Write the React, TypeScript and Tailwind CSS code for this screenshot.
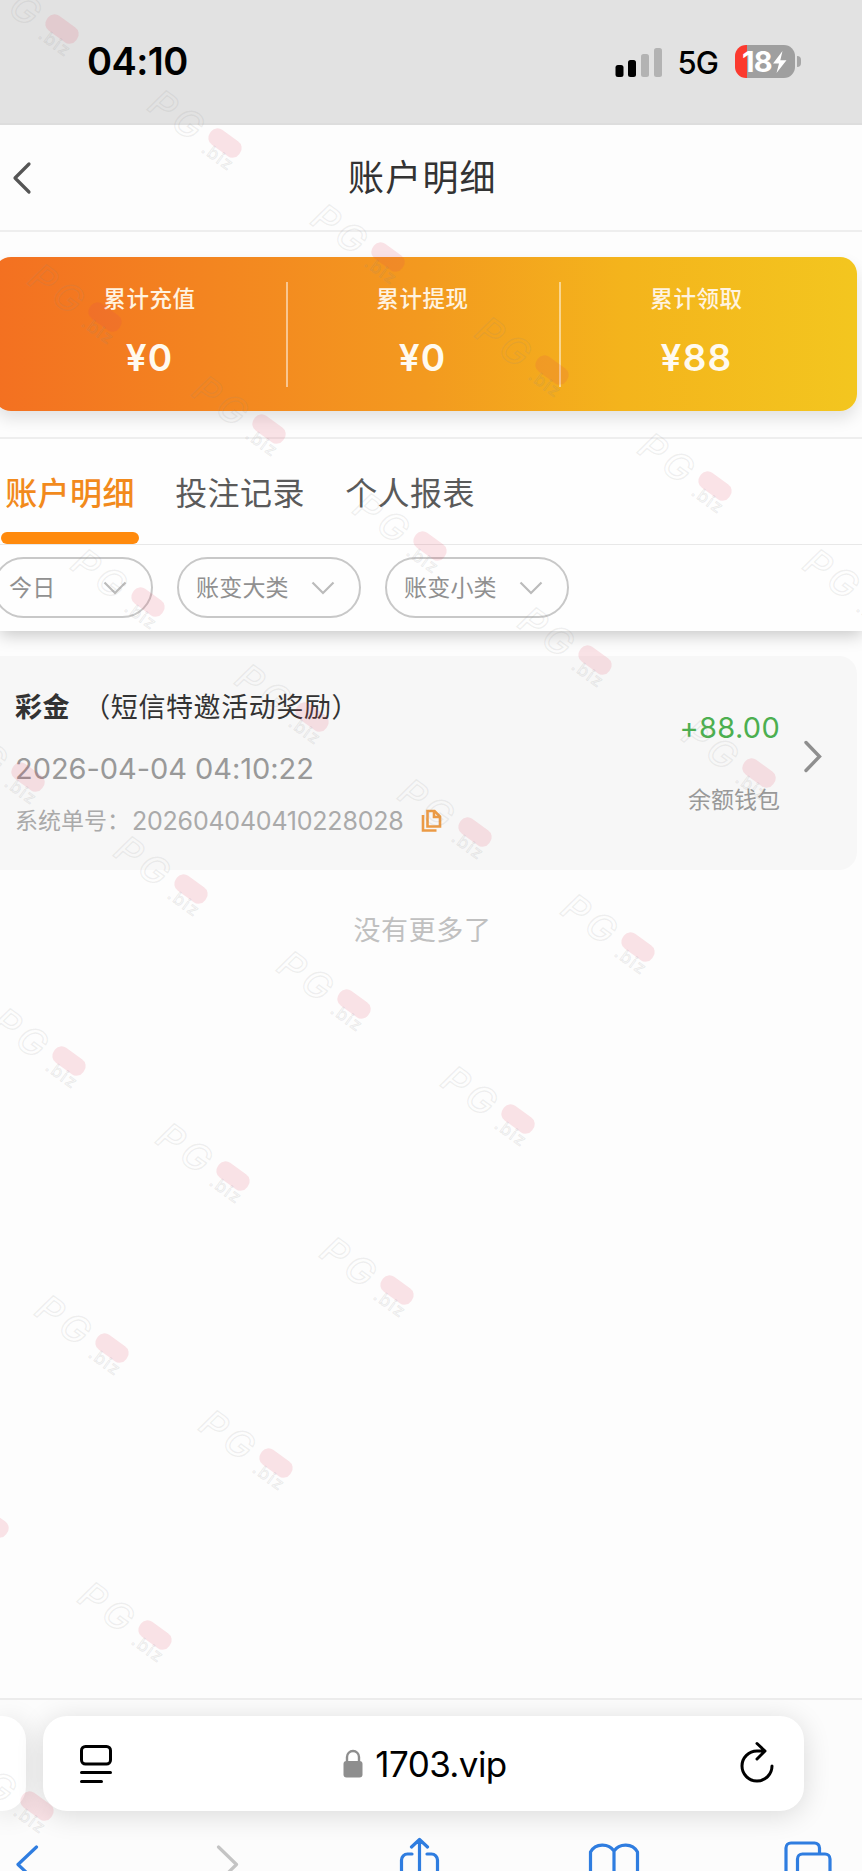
import React from 'react'

const stats = [
  { label: '累计充值', value: '¥0' },
  { label: '累计提现', value: '¥0' },
  { label: '累计领取', value: '¥88' },
]

const tabs = ['账户明细', '投注记录', '个人报表']

const marks = [
  [62, 29], [225, 143], [388, 257], [552, 370], [715, 486],
  [105, 317], [269, 429], [430, 546], [595, 660], [759, 773],
  [880, 602], [148, 602], [312, 717], [475, 832], [638, 947],
  [28, 777], [191, 889], [354, 1004], [518, 1119],
  [69, 1061], [233, 1176], [397, 1290],
  [112, 1348], [276, 1463], [-8, 1523], [155, 1635], [37, 1806],
]

function StatusBar() {
  return (
    <div className="flex h-[125px] items-start justify-between border-b-2 border-[#dddddd] bg-[#e2e2e2] pl-[87px] pr-[61px]">
      <div className="mt-[37px] text-[38px] leading-[48px] font-semibold tracking-[-0.6px] text-black">
        04:10
      </div>
      <div className="mt-[43px] flex items-center">
        <svg width="48" height="34" viewBox="0 0 48 34">
          <rect x="0.5" y="20" width="8" height="12" rx="2.5" fill="#000" />
          <rect x="13" y="15" width="8" height="17" rx="2.5" fill="#000" />
          <rect x="26" y="9" width="8" height="23" rx="2.5" fill="#b3b3b3" />
          <rect x="39" y="3" width="8" height="29" rx="2.5" fill="#b3b3b3" />
        </svg>
        <span className="ml-[14px] mt-[3px] text-[31px] leading-[34px] font-medium tracking-[-0.9px] text-black">
          5G
        </span>
        <div className="ml-[17px] flex h-[34px] items-center">
          <div className="flex h-[33px] w-[60px] items-center rounded-[11px] bg-[linear-gradient(90deg,#fb3a2f_12px,#9f9f9f_12px)] pl-[7px]">
            <span className="-mt-px text-[29px] leading-[33px] font-bold tracking-[-0.8px] text-white">18</span>
            <svg width="16" height="24" viewBox="0 0 16 24">
              <path d="M10.5 1 1 13.5h6L4.5 23 14.5 10.2H8.3z" fill="#fff" />
            </svg>
          </div>
          <div className="ml-[2px] h-[11px] w-[4px] rounded-r-full bg-[#a6a6a6]" />
        </div>
      </div>
    </div>
  )
}

function Header() {
  return (
    <div className="flex h-[107px] items-center border-b-2 border-[#eeeeee]">
      <svg className="ml-[11px]" width="22" height="34" viewBox="0 0 22 34">
        <path d="M18 3 4 17l14 14" fill="none" stroke="#555" strokeWidth="3.2" strokeLinecap="round" strokeLinejoin="round" />
      </svg>
      <h1 className="mt-px ml-[315px] text-[36px] leading-[50px] tracking-[1.2px] text-[#333]">
        账户明细
      </h1>
    </div>
  )
}

function Summary() {
  return (
    <div className="h-[207px] border-b-2 border-[#eeeeee] pt-[25px]">
      <div className="-ml-[6px] flex h-[154px] w-[863px] items-center rounded-[17px] bg-[linear-gradient(90deg,#f37021_0%,#f38520_25%,#f39a1f_50%,#f4b41c_73%,#f3c61f_100%)] pr-[14px] pl-[21px] shadow-[0_8px_16px_rgba(0,0,0,0.11)]">
        {stats.map((item, i) => (
          <div
            key={item.label}
            className={
              'flex h-[105px] w-[273px] shrink-0 flex-col items-center border-white/50 pr-[2px] ' +
              (i < 2 ? 'border-r-2' : '')
            }
          >
            <span className="text-[22.5px] leading-[34px] font-medium tracking-[0.6px] text-[#fff3e0]">
              {item.label}
            </span>
            <span className="mt-[19px] text-[37px] leading-[46px] font-semibold tracking-[1.2px] text-[#fffaf0]">
              {item.value}
            </span>
          </div>
        ))}
      </div>
    </div>
  )
}

function Tabs() {
  return (
    <div className="flex h-[106px] gap-[32px] border-b border-[#e8e8e8] pl-px">
      {tabs.map((tab, i) => (
        <div key={tab} className="flex w-[138px] flex-col items-center">
          <span
            className={
              'mt-[32px] text-[32px] leading-[46px] tracking-[0.4px] whitespace-nowrap ' +
              (i === 0 ? 'font-medium text-[#f28a1c]' : 'text-[#5a5a5a]')
            }
          >
            {tab}
          </span>
          {i === 0 && <div className="mt-[15px] h-[12px] w-full rounded-full bg-[#ff8a0d]" />}
        </div>
      ))}
    </div>
  )
}

function Filter(props) {
  return (
    <div
      className={
        'flex h-[61px] shrink-0 items-center justify-between rounded-full border-2 border-[#c8c8c8] pr-[24px] ' +
        props.width
      }
    >
      <span className="text-[23px] leading-[34px] tracking-[0.2px] text-[#909090]">{props.label}</span>
      <svg width="24" height="14" viewBox="0 0 24 14">
        <path d="m1.5 1.5 10.5 10.5L22.500 1.500" fill="none" stroke="#bbb" strokeWidth="2.2" />
      </svg>
    </div>
  )
}

function Record() {
  return (
    <div className="flex h-[214px] w-[857px] rounded-r-[18px] bg-[#f7f7f7] pr-[34px] pl-[15px]">
      <div className="flex flex-1 flex-col">
        <div className="mt-[33px] text-[27px] leading-[38px] tracking-[0.6px] whitespace-nowrap text-[#333]">
          <span className="font-bold">彩金</span>
          <span className="ml-[13px]">（短信特邀活动奖励）</span>
        </div>
        <div className="mt-[23px] text-[29px] leading-[38px] tracking-[-0.05px] text-[#999]">
          2026-04-04 04:10:22
        </div>
        <div className="mt-[16px] flex items-center text-[#aaa]">
          <span className="text-[23px] leading-[34px]">系统单号：</span>
          <span className="ml-[2px] text-[25px] leading-[34px] tracking-[-0.22px]">202604040410228028</span>
          <svg className="ml-[18px]" width="22" height="24" viewBox="0 0 22 24" fill="none" stroke="#eb9a45" strokeWidth="2.6">
            <path d="M6.500 2h7l5.500 5.500V17.500H6.500z" />
            <path d="M13 2v6h6" />
            <path d="M2 6v15.500h13.500" />
          </svg>
        </div>
      </div>
      <div className="flex flex-col items-end">
        <span className="mt-[53px] text-[29px] leading-[38px] tracking-[0.3px] text-[#4caf50]">+88.00</span>
        <span className="mt-[36px] text-[23px] leading-[34px] text-[#999]">余额钱包</span>
      </div>
      <svg className="mt-[82px] ml-[23px]" width="20" height="36" viewBox="0 0 20 36">
        <path d="M3 4.500 16.500 18.500 3 32.500" fill="none" stroke="#8f8f8f" strokeWidth="3.4" strokeLinecap="round" />
      </svg>
    </div>
  )
}

function AddressBar() {
  return (
    <div className="flex gap-[17px] pt-[16px]">
      <div className="h-[95px] w-[26px] rounded-r-[24px] bg-white shadow-[0_4px_28px_rgba(0,0,0,0.14)]" />
      <div className="flex h-[95px] w-[761px] items-center justify-between rounded-[24px] bg-white pr-[30px] pl-[37px] shadow-[0_4px_28px_rgba(0,0,0,0.14)]">
        <svg width="32" height="40" viewBox="0 0 32 40" fill="none" stroke="#000" strokeWidth="3" strokeLinecap="round">
          <rect x="1.500" y="2.500" width="29" height="17.500" rx="4" />
          <path d="M1.500 28.500h29M1.500 37.500h20" />
        </svg>
        <div className="-ml-[2px] flex items-center">
          <svg width="20" height="30" viewBox="0 0 20 30">
            <path d="M4 13V8a6 6 0 0 1 12 0v5" fill="none" stroke="#8e8e8e" strokeWidth="2.400" />
            <rect x="0.500" y="12" width="19" height="16.500" rx="3" fill="#8e8e8e" />
          </svg>
          <span className="ml-[12px] text-[35px] leading-[46px] tracking-[-0.6px] text-black">1703.vip</span>
        </div>
        <svg className="-mt-[4px]" width="34" height="42" viewBox="0 0 34 42" fill="none" stroke="#000" strokeWidth="3" strokeLinecap="round" strokeLinejoin="round">
          <path d="M32 25a15 15 0 1 1-15-15h7M17 2.500l8 7.500-8 8" />
        </svg>
      </div>
    </div>
  )
}

function Toolbar() {
  return (
    <div className="h-[60px] overflow-hidden">
      <svg width="862" height="60" viewBox="0 1811 862 60" fill="none" stroke="#2f7de0" strokeWidth="3.2" strokeLinecap="round" strokeLinejoin="round">
        <path d="M36.500 1847 18 1864.500 36.500 1882" />
        <path d="m218.500 1847 18 17.500-18 17.500" stroke="#c4c4c4" />
        <path d="M412 1854h-4.500a6 6 0 0 0-6 6v20M427 1854h4.500a6 6 0 0 1 6 6v20M419.500 1880v-40M411.500 1847l8-7.500 8 7.500" />
        <path d="M590.500 1880v-28c5-9 18-9 23.500-1v29M614 1851c5.500-8 18.500-8 23.500 1v28" />
        <path d="M786 1880v-32a5 5 0 0 1 5-5h23.500a5 5 0 0 1 5 5v5.500M797.500 1880v-21a5 5 0 0 1 5-5H825a5 5 0 0 1 5 5v21" />
      </svg>
    </div>
  )
}

function Watermark() {
  return (
    <svg className="pointer-events-none absolute inset-0" width="862" height="1871" viewBox="0 0 862 1871">
      {marks.map(([x, y]) => (
        <g key={x + '-' + y} transform={`translate(${x} ${y}) rotate(36)`}>
          <text x="-84" y="19" fontSize="37" fontStyle="italic" fontWeight="500" fill="none" stroke="#8a8a8a" strokeOpacity="0.13" strokeWidth="1.4" letterSpacing="5">
            PG
          </text>
          <rect x="-18" y="-9" width="36" height="18" rx="8" fill="#e5405a" fillOpacity="0.14" />
          <text x="-15" y="21" fontSize="17" fill="none" stroke="#8a8a8a" strokeOpacity="0.17" strokeWidth="0.9" letterSpacing="1.5">
            .biz
          </text>
        </g>
      ))}
    </svg>
  )
}

function App() {
  return (
    <div className="relative h-[1871px] w-[862px] overflow-hidden bg-[#fdfdfd] font-[Inter,'Noto_Sans_CJK_SC',sans-serif]">
      <StatusBar />
      <Header />
      <Summary />
      <div className="h-[192px] bg-[#fefefe] shadow-[0_4px_16px_rgba(0,0,0,0.22)] [clip-path:inset(0_0_-24px_0)]">
        <Tabs />
        <div className="-ml-[7px] flex gap-[24px] pt-[12px]">
          <Filter label="今日" width="w-[160px] pl-[14px]" />
          <Filter label="账变大类" width="w-[184px] pl-[17px]" />
          <Filter label="账变小类" width="w-[184px] pl-[17px]" />
        </div>
      </div>
      <div className="h-[1067px] pt-[25px]">
        <Record />
        <p className="mt-[42px] w-[845px] text-center text-[27px] leading-[38px] tracking-[0.6px] text-[#c0c0c0]">
          没有更多了
        </p>
      </div>
      <div className="h-[173px] overflow-hidden border-t-2 border-[#ececec] bg-[#fcfcfc]">
        <AddressBar />
        <Toolbar />
      </div>
      <Watermark />
    </div>
  )
}

export default App
